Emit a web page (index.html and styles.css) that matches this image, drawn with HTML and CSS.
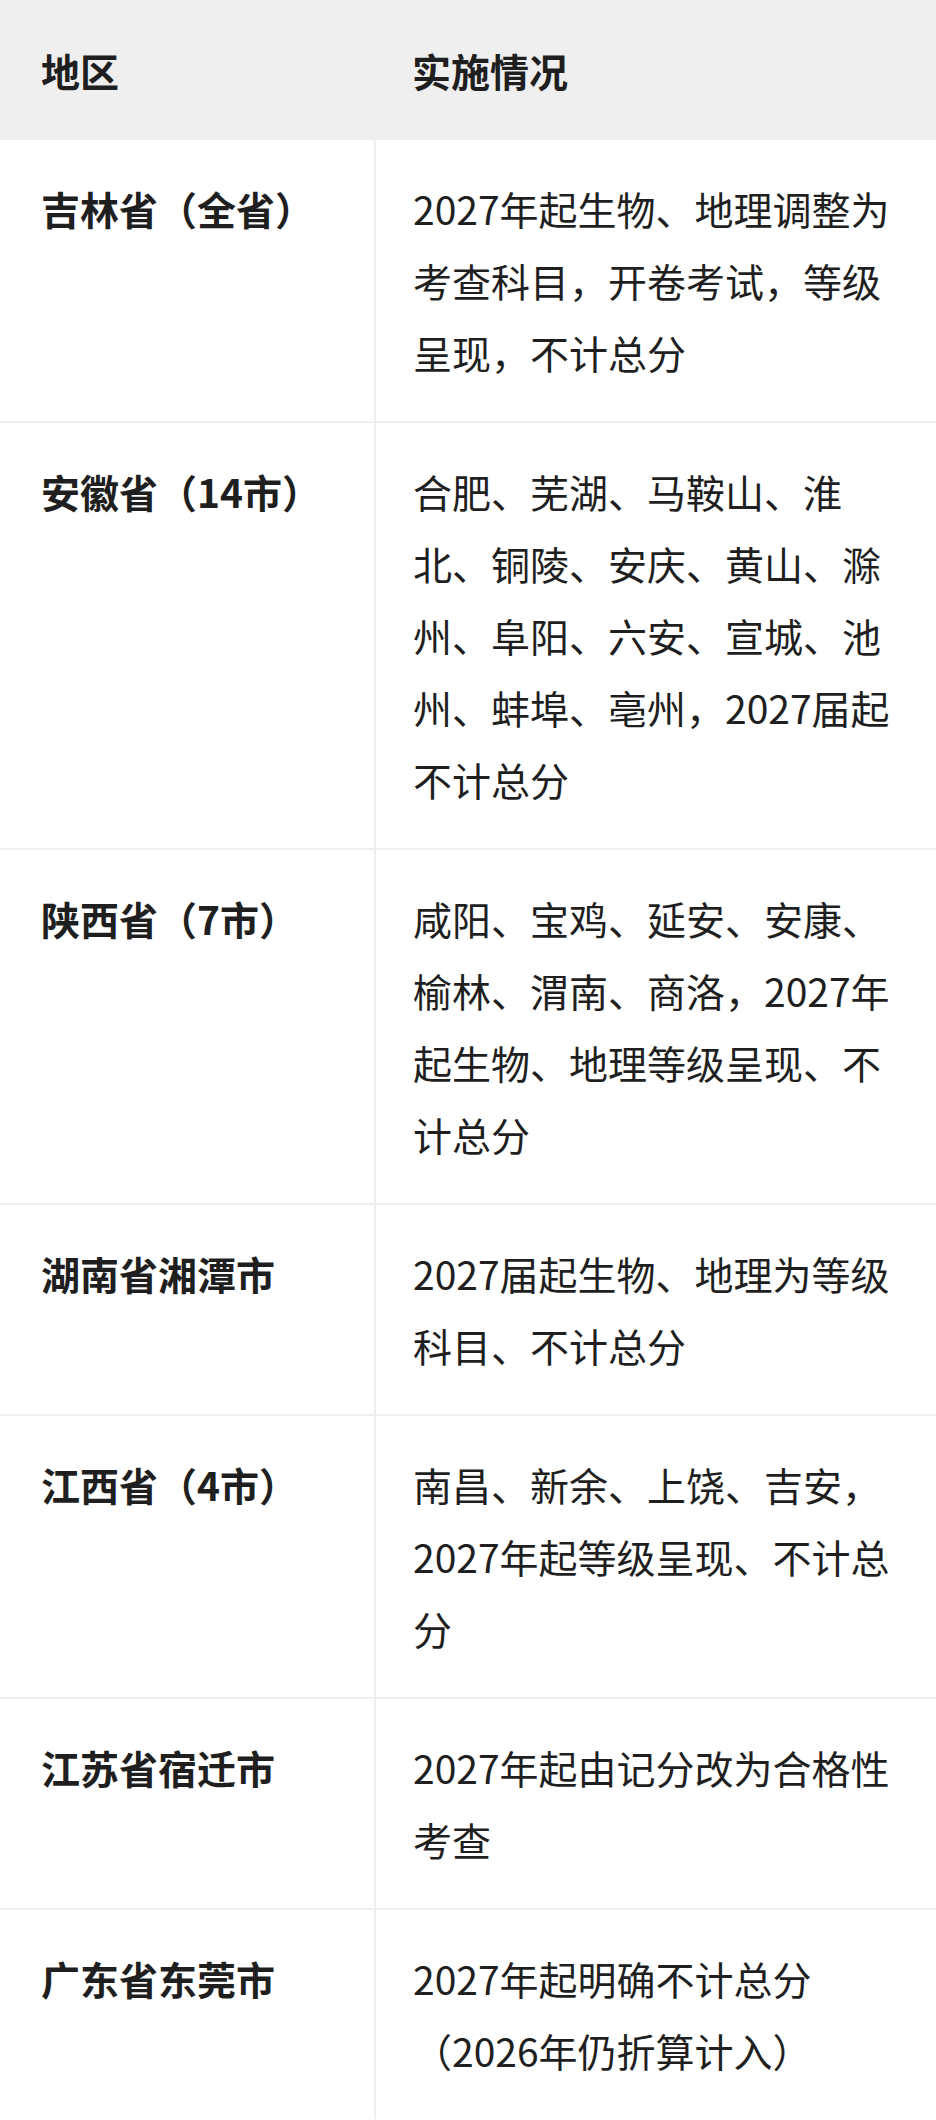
FILE: index.html
```html
<!DOCTYPE html>
<html lang="zh-CN">
<head>
<meta charset="utf-8">
<title>实施情况</title>
<link rel="stylesheet" href="styles.css">
</head>
<body>
<table class="policy">
  <thead>
    <tr><th class="region">地区</th><th class="detail">实施情况</th></tr>
  </thead>
  <tbody>
    <tr><td class="region">吉林省（全省）</td><td class="detail">2027年起生物、地理调整为考查科目，开卷考试，等级呈现，不计总分</td></tr>
    <tr><td class="region">安徽省（14市）</td><td class="detail">合肥、芜湖、马鞍山、淮北、铜陵、安庆、黄山、滁州、阜阳、六安、宣城、池州、蚌埠、亳州，2027届起不计总分</td></tr>
    <tr><td class="region">陕西省（7市）</td><td class="detail">咸阳、宝鸡、延安、安康、榆林、渭南、商洛，2027年起生物、地理等级呈现、不计总分</td></tr>
    <tr><td class="region">湖南省湘潭市</td><td class="detail">2027届起生物、地理为等级科目、不计总分</td></tr>
    <tr><td class="region">江西省（4市）</td><td class="detail">南昌、新余、上饶、吉安，2027年起等级呈现、不计总分</td></tr>
    <tr><td class="region">江苏省宿迁市</td><td class="detail">2027年起由记分改为合格性考查</td></tr>
    <tr><td class="region">广东省东莞市</td><td class="detail">2027年起明确不计总分（2026年仍折算计入）</td></tr>
  </tbody>
</table>
</body>
</html>
```

FILE: styles.css
```css
html, body {
  margin: 0;
  padding: 0;
  background: #ffffff;
}

body {
  font-family: "Noto Sans CJK SC", "Noto Sans", sans-serif;
  color: #1f1f1f;
}

.policy {
  width: 936px;
  border-collapse: collapse;
  table-layout: fixed;
  font-size: 39px;
  line-height: 72px;
}

.policy th,
.policy td {
  vertical-align: top;
  text-align: left;
  padding: 32px 37px 33px 37px;
}

.policy th {
  background: #efefef;
  font-weight: 700;
  padding-top: 34px;
  padding-bottom: 34px;
}

.policy td {
  border-bottom: 2px solid #efefef;
}

.policy .region {
  width: 375px;
  box-sizing: border-box;
  padding-left: 41px;
  padding-right: 20px;
}

.policy td.region {
  font-weight: 700;
  border-right: 2px solid #efefef;
}

.policy .detail {
  padding-left: 37px;
  padding-right: 37px;
}

.policy tbody tr:last-child td {
  border-bottom: none;
}
```
